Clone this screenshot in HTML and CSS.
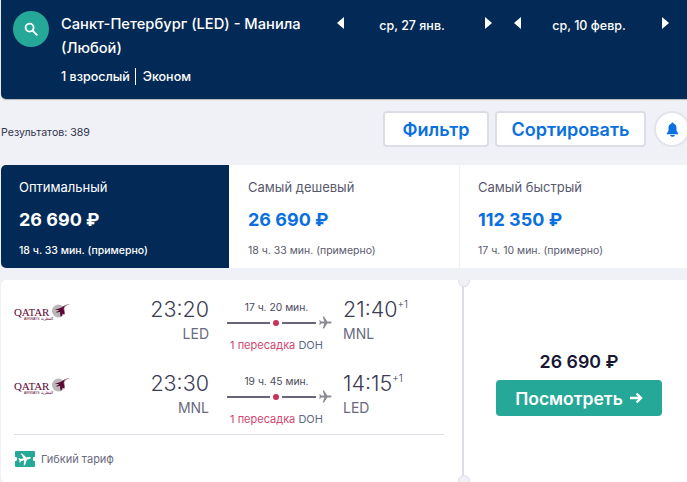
FILE: index.html
```html
<!DOCTYPE html>
<html lang="ru">
<head>
<meta charset="utf-8">
<title>Результаты</title>
<link rel="stylesheet" href="styles.css">
</head>
<body>
<div class="page">
  <header class="header">
    <div class="search-badge">
      <svg width="14" height="14" viewBox="0 0 14 14" fill="none" stroke="#fff" stroke-width="1.8"><circle cx="5.600" cy="5.600" r="4"/><path d="M8.600 8.600l4.200 4.200" stroke-linecap="round"/></svg>
    </div>
    <div class="route">
      <div class="route-title">Санкт-Петербург (LED) - Манила (Любой)</div>
      <div class="route-sub"><span class="route-pax">1 взрослый</span><span>Эконом</span></div>
    </div>
    <div class="dates">
      <div class="date-picker">
        <svg class="arrow" width="7" height="12" viewBox="0 0 7 12"><path d="M7 0v12L0 6z" fill="#fff"/></svg>
        <span class="date-text">ср, 27 янв.</span>
        <svg class="arrow" width="7" height="12" viewBox="0 0 7 12"><path d="M0 0v12l7-6z" fill="#fff"/></svg>
      </div>
      <div class="date-picker second">
        <svg class="arrow" width="7" height="12" viewBox="0 0 7 12"><path d="M7 0v12L0 6z" fill="#fff"/></svg>
        <span class="date-text">ср, 10 февр.</span>
        <svg class="arrow" width="7" height="12" viewBox="0 0 7 12"><path d="M0 0v12l7-6z" fill="#fff"/></svg>
      </div>
    </div>
  </header>

  <div class="toolbar">
    <div class="results">Результатов: 389</div>
    <button class="tool-btn filter">Фильтр</button>
    <button class="tool-btn sort">Сортировать</button>
    <div class="bell">
      <svg width="13" height="15" viewBox="0 0 14 16"><path d="M7 .5c-.8 0-1.300.5-1.300 1.200C3.600 2.300 2.700 4 2.700 6.200v3.200L.8 12.200v.9h12.400v-.9l-1.900-2.800V6.200c0-2.200-.9-3.900-3-4.500C8.300 1 7.800.5 7 .5z" fill="#0a6fe0"/><path d="M4.300 13.800c.5 1.200 1.500 1.900 2.700 1.900s2.200-.7 2.700-1.900z" fill="#0a6fe0"/></svg>
    </div>
  </div>

  <div class="tabs">
    <div class="tab active">
      <div class="tab-label">Оптимальный</div>
      <div class="tab-price">26 690 ₽</div>
      <div class="tab-time">18 ч. 33 мин. (примерно)</div>
    </div>
    <div class="tab">
      <div class="tab-label">Самый дешевый</div>
      <div class="tab-price">26 690 ₽</div>
      <div class="tab-time">18 ч. 33 мин. (примерно)</div>
    </div>
    <div class="tab last">
      <div class="tab-label">Самый быстрый</div>
      <div class="tab-price">112 350 ₽</div>
      <div class="tab-time">17 ч. 10 мин. (примерно)</div>
    </div>
  </div>

  <div class="ticket">
    <div class="ticket-main">
      <div class="leg">
        <div class="airline">
          <div class="logo-word">QATAR<svg class="logo-mark" width="20" height="15" viewBox="0 0 20 15"><circle cx="7.500" cy="8" r="6.500" fill="#b9b7ba"/><path d="M19.500 1.200c-3 .1-5.500.8-7.500 2.300C10 5 7.600 5.600 4 6.800c2 .3 3.400.3 4.600 0C7.500 8 6 8.800 4.500 9.300c2 .2 3.500 0 4.700-.5-.3 1.300-.2 3.100.6 5 .8-.8 1.600-1.800 1.800-3.300.7.700 1.400 1 2 1 .2-1.900-.5-3.700-.9-5.300-.2-1 .6-2 2.300-2.700l-2 .1c1.800-1.200 3.500-1.700 6.500-2.400z" fill="#5c0632"/></svg></div>
          <div class="logo-sub">AIRWAYS القطرية</div>
        </div>
        <div class="point dep"><div class="time">23:20</div><div class="code">LED</div></div>
        <div class="path">
          <div class="dur">17 ч. 20 мин.</div>
          <div class="track"><span class="line"></span><span class="dot"></span><span class="line short"></span>
            <svg class="plane" width="13" height="13" viewBox="0 0 13 13"><path d="M12.500 6.500c0-.6-.7-1-1.500-1H8.300L5 .5H3.700l1.600 5H2.200L1.100 4.200H.2l.6 2.300-.6 2.300h.9l1.100-1.300h3.100l-1.600 5H5l3.300-5H11c.8 0 1.500-.4 1.500-1z" fill="#8b8b96"/></svg>
          </div>
          <div class="stops"><span class="stop-count">1 пересадка</span> DOH</div>
        </div>
        <div class="point arr"><div class="time">21:40<sup>+1</sup></div><div class="code">MNL</div></div>
      </div>
      <div class="leg">
        <div class="airline">
          <div class="logo-word">QATAR<svg class="logo-mark" width="20" height="15" viewBox="0 0 20 15"><circle cx="7.500" cy="8" r="6.500" fill="#b9b7ba"/><path d="M19.500 1.200c-3 .1-5.500.8-7.500 2.300C10 5 7.600 5.600 4 6.800c2 .3 3.400.3 4.600 0C7.500 8 6 8.800 4.500 9.300c2 .2 3.500 0 4.700-.5-.3 1.300-.2 3.100.6 5 .8-.8 1.600-1.800 1.800-3.300.7.700 1.400 1 2 1 .2-1.900-.5-3.700-.9-5.300-.2-1 .6-2 2.300-2.700l-2 .1c1.800-1.200 3.500-1.700 6.500-2.400z" fill="#5c0632"/></svg></div>
          <div class="logo-sub">AIRWAYS القطرية</div>
        </div>
        <div class="point dep"><div class="time">23:30</div><div class="code">MNL</div></div>
        <div class="path">
          <div class="dur">19 ч. 45 мин.</div>
          <div class="track"><span class="line"></span><span class="dot"></span><span class="line short"></span>
            <svg class="plane" width="13" height="13" viewBox="0 0 13 13"><path d="M12.500 6.500c0-.6-.7-1-1.500-1H8.300L5 .5H3.700l1.600 5H2.200L1.100 4.200H.2l.6 2.300-.6 2.300h.9l1.100-1.300h3.100l-1.600 5H5l3.300-5H11c.8 0 1.500-.4 1.500-1z" fill="#8b8b96"/></svg>
          </div>
          <div class="stops"><span class="stop-count">1 пересадка</span> DOH</div>
        </div>
        <div class="point arr"><div class="time">14:15<sup>+1</sup></div><div class="code">LED</div></div>
      </div>
      <div class="tariff">
        <svg width="20" height="16" viewBox="0 0 20 16"><path d="M1 0h18a1 1 0 0 1 1 1v4.800a2.200 2.200 0 0 0 0 4.400V15a1 1 0 0 1-1 1H1a1 1 0 0 1-1-1v-4.800a2.200 2.200 0 0 0 0-4.400V1a1 1 0 0 1 1-1z" fill="#25a898"/><path transform="translate(3.500 1.500) rotate(-14 6.500 6.500)" d="M12.500 6.500c0-.6-.7-1-1.500-1H8.300L5 .5H3.700l1.600 5H2.200L1.100 4.200H.2l.6 2.300-.6 2.300h.9l1.100-1.300h3.100l-1.600 5H5l3.300-5H11c.8 0 1.500-.4 1.500-1z" fill="#fff"/></svg>
        <span>Гибкий тариф</span>
      </div>
    </div>
    <div class="ticket-side">
      <div class="side-price">26 690 ₽</div>
      <button class="view-btn">Посмотреть <svg width="14" height="12" viewBox="0 0 14 12" fill="none" stroke="#fff" stroke-width="2.400"><path d="M1 6h11M7.500 1.500L12 6l-4.500 4.500"/></svg></button>
    </div>
  </div>
</div>
</body>
</html>
```

FILE: styles.css
```css
* { box-sizing: border-box; }
html, body {
  margin: 0;
  height: 100%;
  overflow: hidden;
  background: #eff1f6;
}
body {
  font-family: Inter, "Noto Sans", sans-serif;
  color: #33334d;
}
.page {
  width: 687px;
  height: 482px;
  padding-left: 1px;
  overflow: hidden;
}
.header {
  height: 99px;
  background: #032a56;
  border-bottom-left-radius: 5px;
  box-shadow: 0 1px 1px rgba(0, 0, 0, .25);
  display: flex;
  color: #fff;
  padding: 11px 0 0 12px;
}
.search-badge {
  width: 36px;
  height: 36px;
  border-radius: 50%;
  background: #25a898;
  display: flex;
  align-items: center;
  justify-content: center;
  flex: none;
}
.route {
  width: 276px;
  margin-left: 12px;
  padding-top: 1px;
}
.route-title {
  font-size: 14.700px;
  line-height: 24px;
  font-weight: 500;
  width: 262px;
}
.route-sub {
  margin-top: 8px;
  display: flex;
  align-items: center;
  font-size: 12.500px;
  line-height: 17px;
  font-weight: 500;
}
.route-pax {
  border-right: 1px solid #fff;
  padding-right: 5px;
  margin-right: 7px;
}
.dates {
  display: flex;
  flex: none;
  padding-top: 6px;
}
.date-picker {
  display: flex;
  width: 155px;
  justify-content: space-between;
  height: 12px;
  align-items: center;
}
.date-picker.second {
  margin-left: 22px;
}
.arrow { flex: none; }
.date-text {
  font-size: 12.500px;
  line-height: 12px;
  font-weight: 500;
  padding: 5px 5px 0 0;
}
.toolbar {
  display: flex;
  align-items: center;
  height: 36px;
  margin-top: 12px;
}
.results {
  font-size: 10.600px;
  width: 382px;
  padding-top: 7px;
  color: #33334d;
  flex: none;
}
.tool-btn {
  height: 36px;
  background: #fff;
  border: 2px solid #dcdde6;
  border-radius: 4px;
  color: #0a6fe0;
  font-family: inherit;
  font-size: 18px;
  font-weight: 600;
  padding: 0;
  flex: none;
}
.filter { width: 106px; }
.sort { width: 151px; margin-left: 6px; }
.bell {
  width: 36px;
  height: 36px;
  flex: none;
  margin-left: 8px;
  border-radius: 50%;
  background: #fff;
  border: 2px solid #e3e4eb;
  display: flex;
  align-items: center;
  justify-content: center;
}
.tabs {
  display: flex;
  height: 103px;
  margin-top: 18px;
  background: #fff;
  border-radius: 5px 0 0 5px;
}
.tab {
  width: 230px;
  padding: 14px 0 0 19px;
  color: #5a5a6e;
}
.tab.active {
  width: 228px;
  padding-left: 18px;
  background: #032a56;
  color: #fff;
  border-radius: 5px 0 0 5px;
}
.tab.last {
  width: 228px;
  border-left: 1px solid #eeeef3;
  padding-left: 18px;
}
.tab-label {
  font-size: 13px;
  line-height: 16px;
}
.tab-price {
  font-size: 18px;
  line-height: 24px;
  font-weight: 700;
  margin-top: 13px;
  color: #0a6fe0;
}
.active .tab-price { color: #fff; }
.tab-time {
  font-size: 10.500px;
  line-height: 14px;
  margin-top: 12px;
}
.active .tab-time { font-weight: 500; }
.ticket {
  display: flex;
  height: 202px;
  margin-top: 12px;
  position: relative;
  overflow: hidden;
  border-radius: 5px 0 0 5px;
}
.ticket::before,
.ticket::after {
  content: "";
  position: absolute;
  left: 457px;
  width: 10px;
  height: 10px;
  border-radius: 50%;
  background: #eff1f6;
  border: 1.500px solid #dcdde6;
}
.ticket::before { top: -5px; }
.ticket::after { bottom: -5px; }
.ticket-main {
  width: 463px;
  flex: none;
  background: #fff;
  border-right: 2px solid #dcdde6;
  padding: 14px 18px 0 13px;
}
.leg {
  display: flex;
  height: 66px;
}
.leg + .leg { margin-top: 8px; }
.airline { width: 74px; padding-top: 12px; flex: none; }
.logo-word {
  font-family: "Liberation Serif", serif;
  color: #5c0632;
  font-size: 11px;
  line-height: 12px;
  letter-spacing: -0.100px;
  display: flex;
  align-items: center;
  height: 12px;
}
.logo-mark { margin-left: 2px; margin-top: -4px; flex: none; }
.logo-sub {
  font-family: "Liberation Sans", sans-serif;
  font-size: 3.500px;
  line-height: 4px;
  color: #5c0632;
  padding-left: 10px;
  margin-top: -1px;
}
.point { padding-top: 1px; }
.point .time {
  font-size: 21.500px;
  line-height: 28px;
  font-weight: 350;
  color: #3b3b52;
  white-space: nowrap;
}
.time sup {
  font-size: 10px;
  line-height: 0;
  vertical-align: 9px;
}
.point .code {
  font-size: 14px;
  line-height: 18px;
  margin-top: 2px;
  color: #6a6a7e;
}
.dep {
  width: 60px;
  margin-left: 61px;
  text-align: right;
  flex: none;
}
.path {
  width: 106px;
  margin-left: 18px;
  flex: none;
  padding-top: 7px;
}
.dur {
  font-size: 10.300px;
  line-height: 13px;
  text-align: center;
  padding-right: 7px;
  color: #4a4a5e;
}
.track {
  display: flex;
  align-items: center;
  height: 13px;
  margin-top: 2px;
}
.line {
  width: 43px;
  height: 2px;
  background: #66657a;
  flex: none;
}
.line.short { width: 34px; }
.dot {
  width: 6px;
  height: 6px;
  border-radius: 50%;
  background: #c8325a;
  margin: 0 3px;
  flex: none;
}
.plane { margin-left: 3px; flex: none; }
.stops {
  font-size: 11px;
  line-height: 14px;
  margin-top: 9px;
  text-align: center;
  padding-right: 7px;
  color: #5d6a85;
  white-space: nowrap;
}
.stop-count { color: #d0476f; }
.arr { margin-left: 10px; }
.tariff {
  border-top: 1px solid #dcdde6;
  padding: 16px 0 0 1px;
  display: flex;
  align-items: center;
  gap: 6px;
  font-size: 11px;
  color: #6a6a7e;
}
.ticket-side {
  flex: 1;
  background: #fff;
  display: flex;
  flex-direction: column;
  align-items: center;
  padding: 70px 0 0 7px;
}
.side-price {
  font-size: 17.800px;
  line-height: 24px;
  font-weight: 600;
  color: #171733;
  white-space: nowrap;
}
.view-btn {
  margin-top: 6px;
  width: 166px;
  height: 36px;
  background: #25a898;
  border: 0;
  border-radius: 4px;
  color: #fff;
  font-family: inherit;
  font-size: 17.500px;
  font-weight: 600;
  display: flex;
  align-items: center;
  justify-content: center;
  gap: 6px;
  padding: 0;
}
```
